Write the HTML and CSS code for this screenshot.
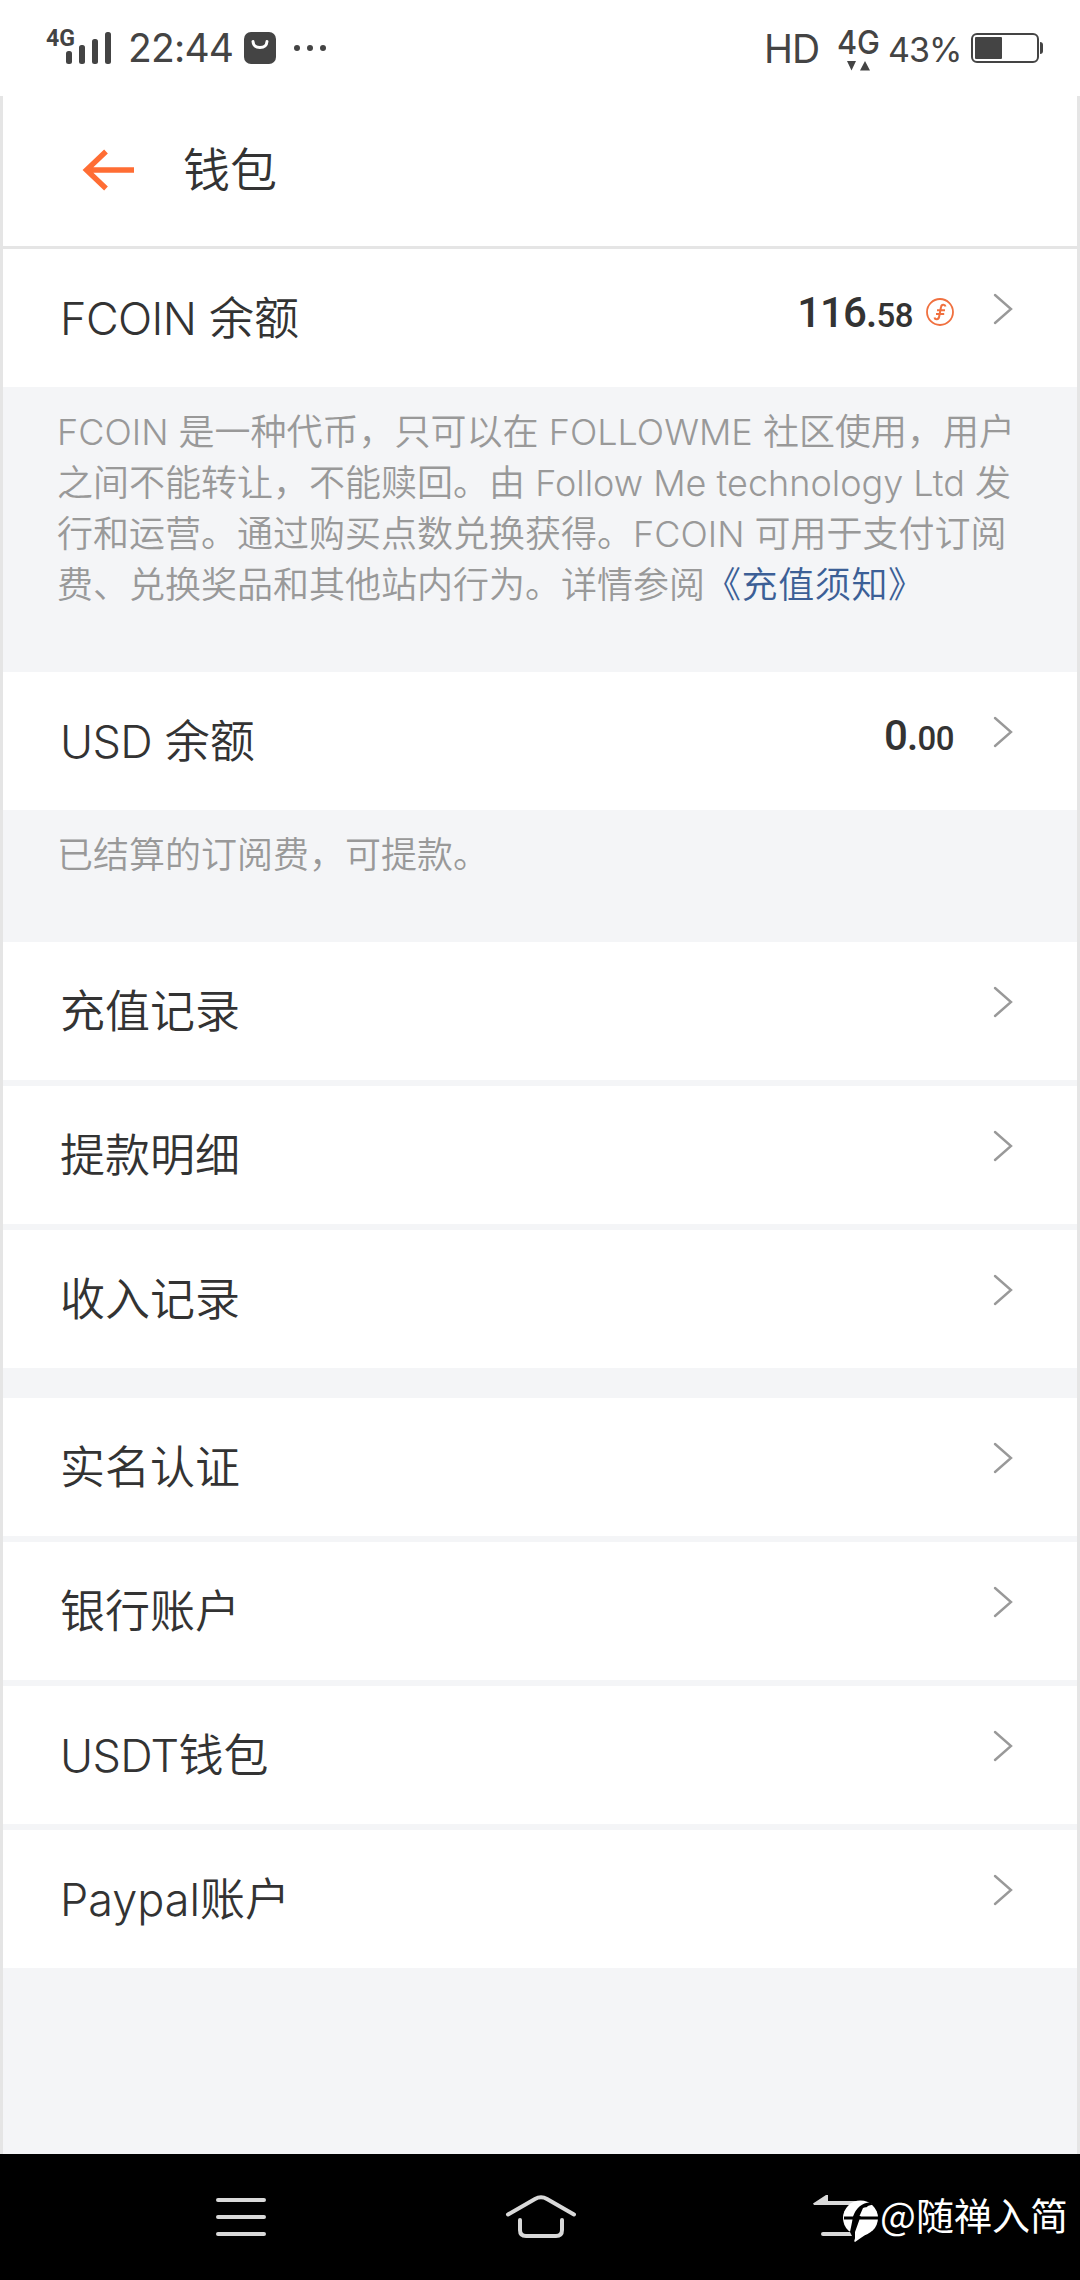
FILE: index.html
```html
<!DOCTYPE html>
<html lang="zh-CN">
<head>
<meta charset="utf-8">
<title>钱包</title>
<link rel="stylesheet" href="styles.css">
</head>
<body>
<svg class="defs" aria-hidden="true">
  <symbol id="chevron" viewBox="0 0 20 32"><path d="M2 2 18 16 2 30" fill="none" stroke="#999" stroke-width="2.4" stroke-linecap="round"/></symbol>
</svg>
<div class="screen">
  <header class="status">
    <svg class="signal" width="66" height="40" viewBox="0 0 66 40">
      <text x="0" y="18" class="net-small" textLength="29" lengthAdjust="spacingAndGlyphs">4G</text>
      <g fill="#444"><rect x="20" y="23" width="6" height="13" rx="2.5"/><rect x="33" y="17" width="6" height="19" rx="2.5"/><rect x="46" y="11" width="6" height="25" rx="2.5"/><rect x="59" y="4" width="6" height="32" rx="2.5"/></g>
    </svg>
    <span class="time">22:44</span>
    <svg class="bag" width="32" height="32" viewBox="0 0 32 32"><rect width="32" height="32" rx="7" fill="#444"/><path d="M9 9.500Q9.500 15.500 16 15.500T23 9.500" fill="none" stroke="#fff" stroke-width="3" stroke-linecap="round"/></svg>
    <svg class="dots" width="34" height="8" viewBox="0 0 34 8" fill="#444"><circle cx="4" cy="4" r="3"/><circle cx="17" cy="4" r="3"/><circle cx="30" cy="4" r="3"/></svg>
    <span class="spacer"></span>
    <span class="hd">HD</span>
    <svg class="net" width="44" height="52" viewBox="0 -8 44 52">
      <text x="0" y="25" class="net-big" textLength="43" lengthAdjust="spacingAndGlyphs">4G</text>
      <path d="M10 32h9l-4.500 9.500zM23 41.500h10l-5-9.500z" fill="#444"/>
    </svg>
    <span class="percent">43%</span>
    <svg class="battery" width="73" height="30" viewBox="0 0 73 30"><rect x="1" y="1" width="66" height="28" rx="5" fill="none" stroke="#444" stroke-width="2"/><rect x="4" y="4" width="27" height="22" rx="1" fill="#444"/><path d="M69 9q3 0 3 3v6q0 3-3 3z" fill="#444"/></svg>
  </header>

  <main class="page">
    <div class="titlebar">
      <svg class="back" width="52" height="42" viewBox="0 0 52 42"><path d="M51 21H4M23 2.500 3.500 21 23 39.500" fill="none" stroke="#ff6d34" stroke-width="5.400"/></svg>
      <h1 class="title">钱包</h1>
    </div>

    <div class="row">
      <span class="label"><span class="latin">FCOIN</span> 余额</span>
      <span class="amount">116.<small>58</small></span>
      <svg class="coin" width="28" height="28" viewBox="0 0 28 28" fill="none" stroke="#f0703f" stroke-width="1.800"><circle cx="14" cy="14" r="13"/><path d="M19.500 8.500C19 6 15.500 6 15 9L13.200 18.500C12.700 22 9 22 8.500 19.500M11 12.200H19M10 16H18.200" stroke-width="2"/></svg>
      <svg class="chev"><use href="#chevron"/></svg>
    </div>
    <p class="note note-long">
      <span class="line">FCOIN 是一种代币，只可以在 FOLLOWME 社区使用，用户</span>
      <span class="line">之间不能转让，不能赎回。由 Follow Me technology Ltd 发</span>
      <span class="line">行和运营。通过购买点数兑换获得。FCOIN 可用于支付订阅</span>
      <span class="line">费、兑换奖品和其他站内行为。详情参阅<a class="link">《充值须知》</a></span>
    </p>

    <div class="row">
      <span class="label"><span class="latin">USD</span> 余额</span>
      <span class="amount">0.<small>00</small></span>
      <svg class="chev"><use href="#chevron"/></svg>
    </div>
    <p class="note note-short"><span class="line">已结算的订阅费，可提款。</span></p>

    <div class="group">
      <div class="row"><span class="label">充值记录</span><svg class="chev"><use href="#chevron"/></svg></div>
      <div class="row"><span class="label">提款明细</span><svg class="chev"><use href="#chevron"/></svg></div>
      <div class="row"><span class="label">收入记录</span><svg class="chev"><use href="#chevron"/></svg></div>
    </div>
    <div class="group">
      <div class="row"><span class="label">实名认证</span><svg class="chev"><use href="#chevron"/></svg></div>
      <div class="row"><span class="label">银行账户</span><svg class="chev"><use href="#chevron"/></svg></div>
      <div class="row"><span class="label"><span class="latin">USDT</span>钱包</span><svg class="chev"><use href="#chevron"/></svg></div>
      <div class="row"><span class="label">Paypal账户</span><svg class="chev"><use href="#chevron"/></svg></div>
    </div>
  </main>

  <footer class="nav">
    <svg class="menu" width="50" height="38" viewBox="0 0 50 38" stroke="#d9d9d9" stroke-width="4" stroke-linecap="round"><path d="M2 2H48M2 19H48M2 36H48"/></svg>
    <svg class="home" width="70" height="44" viewBox="0 0 70 44" fill="none" stroke="#d9d9d9" stroke-width="4" stroke-linecap="round"><path d="M2 19.500 29 4Q35 .500 41 4L68 19.500M14 25V35Q14 41 20 41H50Q56 41 56 35V25"/></svg>
    <svg class="return" width="66" height="48" viewBox="0 0 66 48">
      <path d="M0 8.500 13 0h2v6H48v4H1zM10 37H48v4H10Q8 41 8 39T10 37" fill="#d9d9d9"/>
      <circle cx="47.500" cy="23" r="17.500" fill="#fff"/>
      <path d="M42 36V47L55 38z" fill="#fff"/>
      <path d="M31 21.500H40Q45 8 57 7.500L60 9.500Q50 11 47.500 21.500H66V24.500H46.500L42 37V47L37 37Q38.500 30 39.500 24.500H31z" fill="#000"/>
      <path d="M50 13 53 12 49 21H46.500z" fill="#fff"/>
      <path d="M46.500 26 41 47 47 42 52 30z" fill="#fff"/>
    </svg>
    <span class="mark">@随禅入简</span>
  </footer>
</div>
</body>
</html>
```
FILE: styles.css
```css
* { box-sizing: border-box; }
body { margin: 0; background: #fff; color: #333; font-family: Inter, "Noto Sans CJK SC", sans-serif; font-weight: 350; }
svg { display: block; flex: none; overflow: visible; }
.defs { display: none; }
.screen { width: 1080px; height: 2280px; display: flex; flex-direction: column; overflow: hidden; }

.status { height: 96px; display: flex; align-items: flex-start; padding: 0 36px 0 46px; color: #444; font-weight: 400; white-space: nowrap; }
.signal { margin-top: 28px; }
.net-small { font: 700 24px Roboto, sans-serif; fill: #444; }
.net-big { font: 500 33px Inter, sans-serif; fill: #444; }
.time { width: 116px; margin: 24px 0 0 16px; font-size: 39px; line-height: 48px; letter-spacing: -.8px; }
.bag { margin-top: 32px; }
.dots { margin: 44px 0 0 17px; }
.spacer { flex: 1; }
.hd { width: 73px; margin-top: 25px; font-size: 39px; line-height: 48px; letter-spacing: -1px; }
.net { margin-top: 21px; }
.percent { width: 83px; margin: 26px 0 0 7px; font-size: 34px; line-height: 48px; letter-spacing: -1px; }
.battery { margin-top: 33px; }

.page { height: 2058px; border: solid #e5e5e5; border-width: 0 3px; background: #f4f5f7; }
.titlebar { height: 153px; display: flex; align-items: center; padding: 0 80px; background: #fff; border-bottom: 3px solid #e5e5e5; }
.back { margin-top: -3px; }
.title { margin: -2px 0 0 48px; font-size: 47px; font-weight: 350; line-height: 60px; }
.row { height: 138px; display: flex; align-items: flex-start; padding: 0 64px 0 57px; background: #fff; }
.label { flex: 1; margin-top: 36px; font-size: 45px; line-height: 68px; white-space: nowrap; }
.latin { letter-spacing: -.6px; }
.amount { margin-top: 39px; font: 500 42px/50px Roboto, sans-serif; letter-spacing: -1px; }
.amount small { font-size: 33px; letter-spacing: -.5px; }
.coin { margin: 49px 0 0 13px; }
.chev { width: 20px; height: 32px; margin: 44px 0 0 39px; }
.note { margin: 0; padding: 20px 0 0 54px; font-size: 36px; line-height: 51px; color: #999; }
.note-long { height: 285px; }
.note-short { height: 132px; }
.line { display: block; white-space: nowrap; }
.link { color: #3c5f96; letter-spacing: .6px; }
.group { display: grid; row-gap: 6px; margin-bottom: 30px; }

.nav { height: 126px; display: flex; align-items: flex-start; background: #000; padding-left: 216px; }
.menu { margin-top: 44px; }
.home { margin: 41px 0 0 240px; }
.return { margin: 41px 0 0 237px; }
.mark { margin: 32px 0 0 1px; font-family: "Noto Sans CJK SC", sans-serif; font-size: 38px; font-weight: 400; line-height: 56px; color: #fff; white-space: nowrap; }
```
